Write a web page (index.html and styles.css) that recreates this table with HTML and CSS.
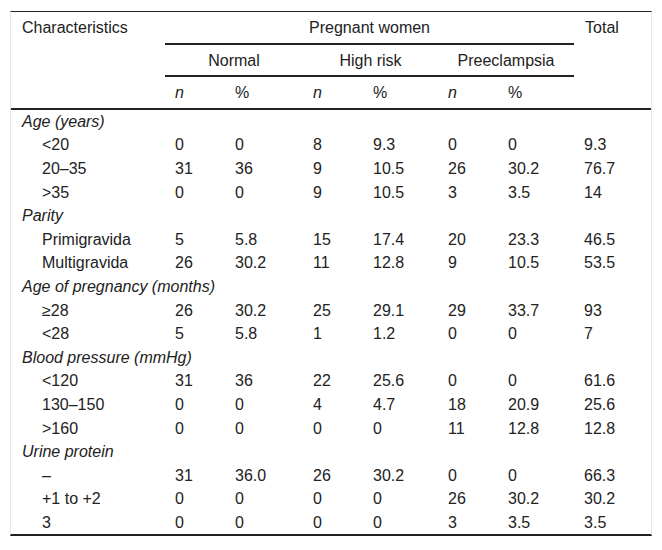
FILE: index.html
```html
<!DOCTYPE html>
<html lang="en">
<head>
<meta charset="utf-8">
<title>Characteristics of pregnant women</title>
<link rel="stylesheet" href="styles.css">
</head>
<body>
<div class="table-wrap">
  <table class="data">
    <colgroup>
      <col class="c-label">
      <col class="c-n">
      <col class="c-p1">
      <col class="c-n">
      <col class="c-p2">
      <col class="c-n">
      <col class="c-p3">
      <col class="c-total">
    </colgroup>
    <thead>
      <tr>
        <th class="corner" rowspan="3">Characteristics</th>
        <th class="group" colspan="6">Pregnant women</th>
        <th class="corner" rowspan="3">Total</th>
      </tr>
      <tr>
        <th class="group" colspan="2">Normal</th>
        <th class="group" colspan="2">High risk</th>
        <th class="group" colspan="2">Preeclampsia</th>
      </tr>
      <tr class="units">
        <th><i>n</i></th>
        <th>%</th>
        <th><i>n</i></th>
        <th>%</th>
        <th><i>n</i></th>
        <th>%</th>
      </tr>
    </thead>
    <tbody>
      <tr class="grp"><td colspan="8"><i>Age (years)</i></td></tr>
      <tr class="sub"><td>&lt;20</td><td>0</td><td>0</td><td>8</td><td>9.3</td><td>0</td><td>0</td><td>9.3</td></tr>
      <tr class="sub"><td>20–35</td><td>31</td><td>36</td><td>9</td><td>10.5</td><td>26</td><td>30.2</td><td>76.7</td></tr>
      <tr class="sub"><td>&gt;35</td><td>0</td><td>0</td><td>9</td><td>10.5</td><td>3</td><td>3.5</td><td>14</td></tr>
      <tr class="grp"><td colspan="8"><i>Parity</i></td></tr>
      <tr class="sub"><td>Primigravida</td><td>5</td><td>5.8</td><td>15</td><td>17.4</td><td>20</td><td>23.3</td><td>46.5</td></tr>
      <tr class="sub"><td>Multigravida</td><td>26</td><td>30.2</td><td>11</td><td>12.8</td><td>9</td><td>10.5</td><td>53.5</td></tr>
      <tr class="grp"><td colspan="8"><i>Age of pregnancy (months)</i></td></tr>
      <tr class="sub"><td>≥28</td><td>26</td><td>30.2</td><td>25</td><td>29.1</td><td>29</td><td>33.7</td><td>93</td></tr>
      <tr class="sub"><td>&lt;28</td><td>5</td><td>5.8</td><td>1</td><td>1.2</td><td>0</td><td>0</td><td>7</td></tr>
      <tr class="grp"><td colspan="8"><i>Blood pressure (mmHg)</i></td></tr>
      <tr class="sub"><td>&lt;120</td><td>31</td><td>36</td><td>22</td><td>25.6</td><td>0</td><td>0</td><td>61.6</td></tr>
      <tr class="sub"><td>130–150</td><td>0</td><td>0</td><td>4</td><td>4.7</td><td>18</td><td>20.9</td><td>25.6</td></tr>
      <tr class="sub"><td>&gt;160</td><td>0</td><td>0</td><td>0</td><td>0</td><td>11</td><td>12.8</td><td>12.8</td></tr>
      <tr class="grp"><td colspan="8"><i>Urine protein</i></td></tr>
      <tr class="sub"><td>–</td><td>31</td><td>36.0</td><td>26</td><td>30.2</td><td>0</td><td>0</td><td>66.3</td></tr>
      <tr class="sub"><td>+1 to +2</td><td>0</td><td>0</td><td>0</td><td>0</td><td>26</td><td>30.2</td><td>30.2</td></tr>
      <tr class="sub"><td>3</td><td>0</td><td>0</td><td>0</td><td>0</td><td>3</td><td>3.5</td><td>3.5</td></tr>
    </tbody>
  </table>
</div>
</body>
</html>
```

FILE: styles.css
```css
html, body {
  margin: 0;
  padding: 0;
  background: #ffffff;
}

body {
  font-family: "Liberation Sans", Arial, sans-serif;
  font-size: 16px;
  color: #222222;
}

.table-wrap {
  margin: 11px 10px 0 10px;
  border-top: 1px solid #222222;
  border-bottom: 2px solid #222222;
  border-left: 1px solid #e6e6e6;
  border-right: 1px solid #e6e6e6;
}

.data {
  width: 100%;
  border-collapse: separate;
  border-spacing: 0;
  table-layout: fixed;
}

.c-label { width: 154px; }
.c-n { width: 60px; }
.c-p1 { width: 78px; }
.c-p2 { width: 75px; }
.c-p3 { width: 76px; }
.c-total { width: 77px; }

.data th,
.data td {
  padding: 2px 10px;
  line-height: 19.6px;
  text-align: left;
  font-weight: normal;
  white-space: nowrap;
  vertical-align: top;
}

.data thead th {
  padding-top: 6px;
  padding-bottom: 5px;
}

.data th.corner {
  padding-left: 11px;
  border-bottom: 2px solid #222222;
}

.data th.group {
  text-align: center;
  border-bottom: 2px solid #222222;
}

.data tr.units th {
  border-bottom: 2px solid #222222;
}

.data tr.grp td {
  padding-left: 11px;
}

.data tr.sub td:first-child {
  padding-left: 31px;
}
```
